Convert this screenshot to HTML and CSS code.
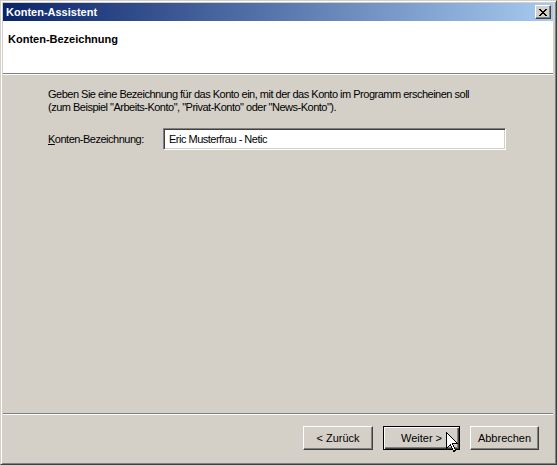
FILE: index.html
```html
<!DOCTYPE html>
<html lang="de">
<head>
	<meta charset="UTF-8">
	<title>Konten-Assistent</title>
	<link rel="stylesheet" href="styles.css">
</head>
<body>

<div class="window">
	<div class="titlebar">
		<span class="title">Konten-Assistent</span>
		<span class="close-btn">
			<svg width="8" height="7" viewBox="0 0 8 7">
				<path d="M0 0h2v1h-2zM6 0h2v1h-2zM1 1h2v1h-2zM5 1h2v1h-2zM2 2h4v1h-4zM3 3h2v1h-2zM2 4h4v1h-4zM1 5h2v1h-2zM5 5h2v1h-2zM0 6h2v1h-2zM6 6h2v1h-2z" fill="#000"/>
			</svg>
		</span>
	</div>

	<div class="page-header">
		<h1>Konten-Bezeichnung</h1>
	</div>

	<div class="page-body">
		<p class="intro">Geben Sie eine Bezeichnung für das Konto ein, mit der das Konto im Programm erscheinen soll<br>(zum Beispiel "Arbeits-Konto", "Privat-Konto" oder "News-Konto").</p>
		<div class="field-row">
			<label for="account-name"><u>K</u>onten-Bezeichnung:</label>
			<input id="account-name" type="text" value="Eric Musterfrau - Netic">
		</div>
	</div>

	<div class="button-bar">
		<button class="btn btn-back">&lt; Zurück</button>
		<button class="btn btn-next">Weiter &gt;</button>
		<button class="btn btn-cancel">Abbrechen</button>
	</div>

	<!-- mouse pointer resting on the Weiter button -->
	<svg class="pointer" width="13" height="21" viewBox="0 0 13 21">
		<path d="M0.5 0.5 L0.5 16.5 L4.5 12.5 L7.5 19.5 L9.5 18.5 L6.5 11.5 L11.5 11.5 Z" fill="#fff" stroke="#000" stroke-width="1" shape-rendering="crispEdges"/>
	</svg>
</div>

</body>
</html>
```

FILE: styles.css
```css
	body {
		margin: 0;
		background-color: #d4d0c8;
		font-family: "Liberation Sans", Arial, sans-serif;
		font-size: 11px;
		color: #000;
}
	.window {
		position: relative;
		box-sizing: border-box;
		width: 557px;
		height: 465px;
		display: flex;
		flex-direction: column;
		background-color: #d4d0c8;
		border-top: 1px solid #d4d0c8;
		border-left: 1px solid #d4d0c8;
		border-right: 1px solid #404040;
		border-bottom: 1px solid #404040;
		box-shadow: inset 1px 1px 0 #fff, inset -1px -1px 0 #808080;
		padding: 2px 3px 3px 2px;
}
	.titlebar {
		height: 18px;
		display: flex;
		align-items: center;
		justify-content: space-between;
		padding: 0 2px 0 3px;
		background: linear-gradient(to right, #0a246a, #a6caf0);
}
	.title {
		color: #fff;
		font-weight: bold;
		font-size: 11px;
}
	.close-btn {
		box-sizing: border-box;
		width: 16px;
		height: 14px;
		display: flex;
		align-items: center;
		justify-content: center;
		background-color: #d4d0c8;
		border-top: 1px solid #fff;
		border-left: 1px solid #fff;
		border-right: 1px solid #404040;
		border-bottom: 1px solid #404040;
		box-shadow: inset -1px -1px 0 #808080;
}
	.page-header {
		height: 52px;
		background-color: #fff;
		border-bottom: 1px solid #808080;
		box-shadow: 0 1px 0 #fff;
		margin-bottom: 1px;
}
	.page-header h1 {
		margin: 0;
		padding: 12px 0 0 5px;
		font-size: 11px;
		line-height: 13px;
		font-weight: bold;
}
	.page-body {
		flex: 1;
		padding: 13px 0 0 45px;
		border-bottom: 1px solid #808080;
		box-shadow: 0 1px 0 #fff;
		margin-bottom: 1px;
		letter-spacing: -0.5px;
}
	.intro {
		margin: 0;
		line-height: 13px;
}
	.field-row {
		display: flex;
		align-items: center;
		margin-top: 14px;
}
	.field-row label {
		width: 115px;
}
	.field-row input {
		box-sizing: border-box;
		width: 343px;
		height: 22px;
		margin: 0;
		padding: 0 0 0 5px;
		font-family: inherit;
		font-size: 11px;
		letter-spacing: -0.5px;
		color: #000;
		background-color: #fff;
		border-top: 1px solid #808080;
		border-left: 1px solid #808080;
		border-right: 1px solid #fff;
		border-bottom: 1px solid #fff;
		box-shadow: inset 1px 1px 0 #404040, inset -1px -1px 0 #d4d0c8;
		outline: none;
}
	.button-bar {
		height: 46px;
		display: flex;
		justify-content: flex-end;
		align-items: flex-start;
		gap: 10px;
		padding: 11px 14px 0 0;
		box-sizing: border-box;
}
	.btn {
		box-sizing: border-box;
		height: 24px;
		margin: 0;
		padding: 0;
		font-family: inherit;
		font-size: 11px;
		color: #000;
		background-color: #d4d0c8;
		border-top: 1px solid #fff;
		border-left: 1px solid #fff;
		border-right: 1px solid #404040;
		border-bottom: 1px solid #404040;
		box-shadow: inset -1px -1px 0 #808080, inset 1px 1px 0 #d4d0c8;
}
	.btn-back {
		width: 70px;
}
	.btn-next {
		width: 77px;
		border: 1px solid #000;
		box-shadow: inset 1px 1px 0 #fff, inset -1px -1px 0 #404040, inset -2px -2px 0 #808080;
}
	.btn-cancel {
		width: 69px;
}
	.pointer {
		position: absolute;
		left: 445px;
		top: 431px;
}
```
